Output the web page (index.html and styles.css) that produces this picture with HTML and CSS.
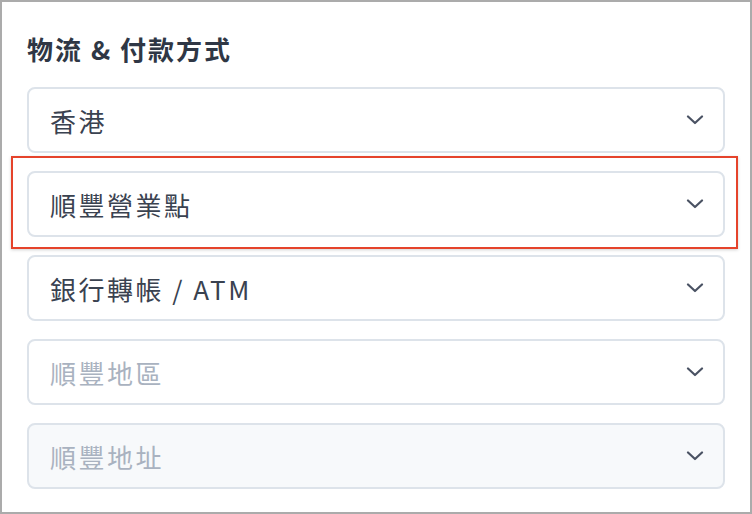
FILE: index.html
```html
<!DOCTYPE html>
<html lang="zh-Hant">
<head>
<meta charset="utf-8">
<link rel="stylesheet" href="styles.css">
</head>
<body>
<div class="frame">
  <h2 class="title">物流 &amp; 付款方式</h2>
  <div class="fields">
    <div class="select">
      <span class="value">香港</span>
      <svg class="chev" width="18" height="10" viewBox="0 0 18 10"><path d="M2 1.5 L9 8 L16 1.5" fill="none" stroke="#4a5263" stroke-width="2.2" stroke-linecap="round" stroke-linejoin="round"/></svg>
    </div>
    <div class="select highlighted">
      <span class="value">順豐營業點</span>
      <svg class="chev" width="18" height="10" viewBox="0 0 18 10"><path d="M2 1.5 L9 8 L16 1.5" fill="none" stroke="#4a5263" stroke-width="2.2" stroke-linecap="round" stroke-linejoin="round"/></svg>
    </div>
    <div class="select">
      <span class="value">銀行轉帳 / ATM</span>
      <svg class="chev" width="18" height="10" viewBox="0 0 18 10"><path d="M2 1.5 L9 8 L16 1.5" fill="none" stroke="#4a5263" stroke-width="2.2" stroke-linecap="round" stroke-linejoin="round"/></svg>
    </div>
    <div class="select">
      <span class="value placeholder">順豐地區</span>
      <svg class="chev" width="18" height="10" viewBox="0 0 18 10"><path d="M2 1.5 L9 8 L16 1.5" fill="none" stroke="#4a5263" stroke-width="2.2" stroke-linecap="round" stroke-linejoin="round"/></svg>
    </div>
    <div class="select disabled">
      <span class="value placeholder">順豐地址</span>
      <svg class="chev" width="18" height="10" viewBox="0 0 18 10"><path d="M2 1.5 L9 8 L16 1.5" fill="none" stroke="#4a5263" stroke-width="2.2" stroke-linecap="round" stroke-linejoin="round"/></svg>
    </div>
  </div>
</div>
</body>
</html>
```

FILE: styles.css
```css
html, body {
  margin: 0;
  padding: 0;
  background: #ffffff;
}
body {
  width: 752px;
  height: 514px;
  overflow: hidden;
  font-family: "Noto Sans CJK TC", "Noto Sans", sans-serif;
}
.frame {
  box-sizing: border-box;
  width: 752px;
  height: 514px;
  border: 2px solid #ababab;
  padding: 32px 25px 0 25px;
}
.title {
  margin: 0 0 23px 0;
  font-size: 26px;
  line-height: 30px;
  font-weight: 700;
  color: #2f3745;
  letter-spacing: 2px;
}
.fields {
  display: flex;
  flex-direction: column;
  gap: 18px;
}
.select {
  position: relative;
  box-sizing: border-box;
  height: 66px;
  border: 2px solid #dde3ea;
  border-radius: 8px;
  background: #ffffff;
  display: flex;
  align-items: center;
  justify-content: space-between;
  padding: 0 19px 0 21px;
}
.select.disabled {
  background: #f7f9fb;
}
.value {
  font-size: 26px;
  color: #3a4250;
  letter-spacing: 2.5px;
}
.value.placeholder {
  color: #a9b2c0;
}
.chev {
  display: block;
}
.highlighted::after {
  content: "";
  position: absolute;
  left: -18px;
  top: -17px;
  right: -15px;
  bottom: -14px;
  border: 2.5px solid #e5432b;
  box-shadow: 0 1px 3px rgba(0,0,0,0.18);
  pointer-events: none;
}
```
